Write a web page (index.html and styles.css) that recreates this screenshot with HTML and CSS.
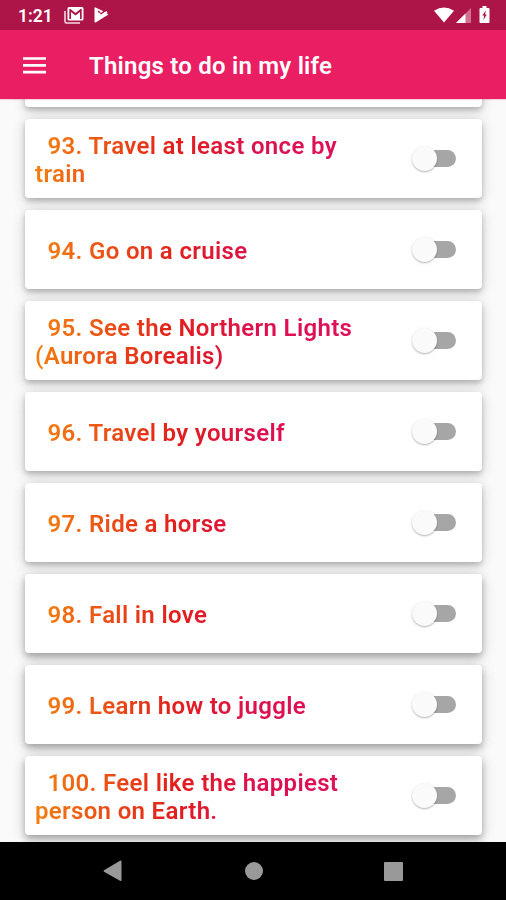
FILE: index.html
```html
<!DOCTYPE html>
<html lang="en">
<head>
<meta charset="utf-8">
<title>Things to do in my life</title>
<link rel="stylesheet" href="styles.css">
</head>
<body>
<div class="screen">
  <div class="status">
    <span class="clock">1:21</span>
    <svg class="mail" width="20" height="17" viewBox="0 0 20 17"><path d="M1 4V14.500Q1 16 2.500 16H16" fill="none" stroke="#f6d9e2" stroke-width="1.600"/><path fill="#fff" fill-rule="evenodd" d="M5 0H18Q19.500 0 19.500 1.500V12Q19.500 13.500 18 13.500H5Q3.500 13.500 3.500 12V1.500Q3.500 0 5 0ZM5.300 2V12H7V5L11.500 8.500L16 5V12H17.700V2H16.500L11.500 6L6.500 2Z"/></svg>
    <svg class="play" width="15" height="16" viewBox="0 0 15 16"><path fill="#fff" d="M.5 1Q.5 0 1.500 .5L11 5L14.500 7.500L2 15.300Q.5 16 .5 14.500Z"/><path d="M4.300 4L6.700 7L11.500 3.300" fill="none" stroke="#ad1448" stroke-width="1.500"/><path d="M4.500 6L7 9L13 4.700" fill="none" stroke="#fff" stroke-width="1.800"/></svg>
    <span class="spacer"></span>
    <svg class="wifi" width="20" height="16" viewBox="0 0 20 16"><path fill="#fff" d="M0 3.700Q10-2.700 20 3.700L10 15.500Z"/></svg>
    <svg class="signal" width="15" height="15" viewBox="0 0 15 15"><path fill="#d06f91" d="M15 0V15H0Z"/><path fill="#fff" d="M9.500 5.500V15H0Z"/></svg>
    <svg class="battery" width="11" height="17" viewBox="0 0 11 17"><path fill="#fff" d="M3.500 0H7.500V2H9.500Q10.500 2 10.500 3V16Q10.500 17 9.500 17H1.500Q.5 17 .5 16V3Q.5 2 1.500 2H3.500Z"/><path fill="#ad1448" d="M7 4.500L3.200 9.500H5.200L4.500 14L7.800 8.500H6Z"/></svg>
  </div>
  <header class="appbar">
    <svg width="24" height="17" viewBox="0 0 24 17"><path d="M0 1.500H23M0 8.300H23M0 15.100H23" stroke="#fff" stroke-width="2.700"/></svg>
    <h1>Things to do in my life</h1>
  </header>
  <main class="list">
    <div class="card"></div>
    <div class="card"><p><span>93. Travel at least once by<br>train</span></p><i class="switch"></i></div>
    <div class="card"><p><span>94. Go on a cruise</span></p><i class="switch"></i></div>
    <div class="card"><p><span>95. See the Northern Lights<br>(Aurora Borealis)</span></p><i class="switch"></i></div>
    <div class="card"><p><span>96. Travel by yourself</span></p><i class="switch"></i></div>
    <div class="card"><p><span>97. Ride a horse</span></p><i class="switch"></i></div>
    <div class="card low"><p><span>98. Fall in love</span></p><i class="switch"></i></div>
    <div class="card low"><p><span>99. Learn how to juggle</span></p><i class="switch"></i></div>
    <div class="card low"><p><span>100. Feel like the happiest<br>person on Earth.</span></p><i class="switch"></i></div>
  </main>
  <nav class="nav">
    <svg width="19" height="22" viewBox="0 0 19 22"><path fill="#999" d="M18.500 1.500V20Q18.500 21.500 17 20.800L1 11.800Q0 11 1 10.200L17 .7Q18.500 0 18.500 1.500Z"/></svg>
    <i class="home"></i>
    <i class="recent"></i>
  </nav>
</div>
</body>
</html>
```
FILE: styles.css
```css
* { box-sizing: border-box; }
body { margin: 0; font-family: Roboto, sans-serif; }
.screen {
  width: 506px;
  height: 900px;
  display: flex;
  flex-direction: column;
  overflow: hidden;
  background: #fafafa;
}
.status {
  height: 30px;
  flex: none;
  display: flex;
  align-items: flex-start;
  padding: 0 16px 0 18px;
  background: #ad1448;
  color: #fff;
}
.clock { width: 46px; font-size: 17.5px; font-weight: 600; line-height: 32px; }
.mail { margin-top: 7px; }
.play { margin: 7px 0 0 10px; }
.spacer { flex: 1; }
.wifi { margin: 7px 2px 0 0; }
.signal { margin: 8px 8px 0 0; }
.battery { margin-top: 6px; }
.appbar {
  height: 69px;
  flex: none;
  display: flex;
  align-items: center;
  padding: 1px 0 0 23px;
  background: #e91e63;
  color: #fff;
  z-index: 1;
  box-shadow: 0 1px 1px rgba(233, 30, 99, .2);
}
h1 {
  margin: 1px 0 0 42px;
  font-size: 24px;
  font-weight: 600;
  line-height: 28px;
  letter-spacing: .22px;
}
.list {
  flex: 1;
  min-height: 0;
  overflow: hidden;
  display: flex;
  flex-direction: column;
  gap: 12px;
  padding: 0 24px 0 25px;
}
.card {
  height: 79px;
  flex: none;
  display: flex;
  align-items: center;
  justify-content: space-between;
  padding: 0 26px 0 10px;
  border-radius: 4px;
  background: #fff;
  box-shadow: 0 3px 5px rgba(0, 0, 0, .19), 0 3px 14px rgba(0, 0, 0, .19);
}
.card.low { box-shadow: 0 4px 6px rgba(0, 0, 0, .22), 0 3px 14px rgba(0, 0, 0, .22); }
.card:first-child { margin-top: -71px; }
p {
  margin: 2px 0 0;
  width: 360px;
  text-indent: 12.5px;
  font-size: 24px;
  font-weight: 600;
  line-height: 28px;
  letter-spacing: .33px;
  color: transparent;
  background: linear-gradient(100deg, #f5850f 0, #e21f1b 140px, #dc104e 220px, #e0115f 100%);
  -webkit-background-clip: text;
  background-clip: text;
}
.switch {
  position: relative;
  width: 38px;
  height: 17px;
  border-radius: 9px;
  background: #a6a6a6;
}
.switch::before {
  content: "";
  position: absolute;
  left: -6px;
  top: -4px;
  width: 25px;
  height: 25px;
  border-radius: 50%;
  background: #fafafa;
  box-shadow: 0 1px 2px rgba(0, 0, 0, .3);
}
.nav {
  height: 58px;
  flex: none;
  display: flex;
  align-items: center;
  padding: 0 0 1px 103px;
  background: #000;
  z-index: 1;
}
.home {
  width: 18px;
  height: 18px;
  margin: 0 121px 0 122.5px;
  border-radius: 50%;
  background: #999;
}
.recent {
  width: 19px;
  height: 19px;
  margin-top: 1px;
  border-radius: 1px;
  background: #999;
}
```
